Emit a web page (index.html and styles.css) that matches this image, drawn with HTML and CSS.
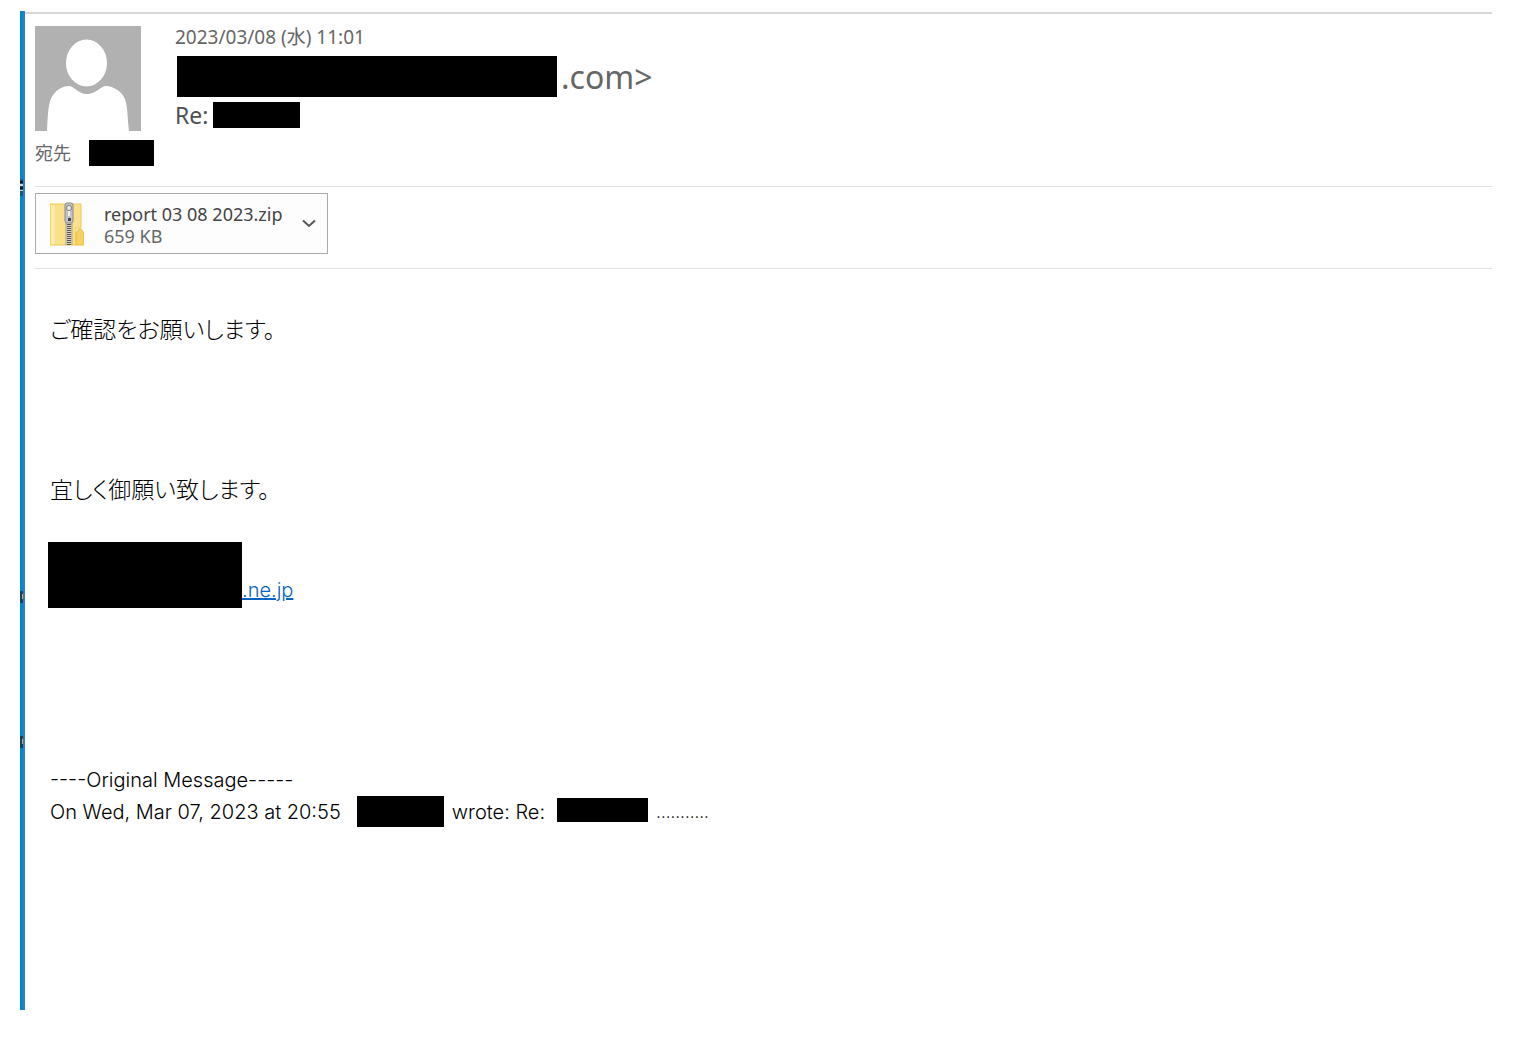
FILE: index.html
```html
<!DOCTYPE html>
<html lang="ja">
<head>
<meta charset="utf-8">
<title>Re: report 03 08 2023.zip</title>
<meta name="viewport" content="width=device-width, initial-scale=1">
<link rel="stylesheet" href="styles.css">
</head>
<body>
<div class="window">
  <svg class="edge" viewBox="0 0 5 999" preserveAspectRatio="none" aria-hidden="true">
    <rect width="5" height="999" fill="#0088cc"/>
    <rect x="3" width="2" height="999" fill="#2a7fc6"/>
    <path d="M0 168h3v17H0z" fill="#12577c"/>
    <path d="M0 170h3v2H0zM0 176h3v2H0z" fill="#111"/>
    <path d="M0 173h3v2H0zM0 179h3v1H0z" fill="#c9d6d8"/>
    <path d="M0 580h3v12H0zM0 725h3v12H0z" fill="#17415f"/>
    <path d="M2 583h1v5H2zM2 728h1v5H2z" fill="#d9a955"/>
  </svg>
  <main class="message">
    <header class="header">
      <svg class="avatar" viewBox="0 0 106 105" role="img" aria-label="Sender">
        <rect width="106" height="105" fill="#b1b1b1"/>
        <ellipse cx="51.500" cy="37" rx="20.500" ry="23.500" fill="#fff"/>
        <path d="M12 105 C13 87 13 76 18 69 C22 63 29 60 34 60 C39 60 43 68 52 68 C61 68 66 60 71 60 C77 60 85 64 89 71 C93 78 92 90 94 105Z" fill="#fff"/>
      </svg>
      <div class="details">
        <time class="date" datetime="2023-03-08T11:01">2023/03/08 (水) 11:01</time>
        <div class="sender"><span class="redacted redacted-sender"></span>.com&gt;</div>
        <h1 class="subject">Re:<span class="redacted redacted-subject"></span></h1>
      </div>
    </header>
    <div class="recipients">宛先<span class="redacted redacted-recipient"></span></div>
    <section class="attachments">
      <div class="attachment">
        <button class="file" type="button">
          <svg class="zip" viewBox="0 0 34 44" aria-hidden="true">
            <path d="M0 2h31v24h-5v17H0z" fill="#fae08a" stroke="#efc94f"/>
            <path d="M1 3h4v39H1z" fill="#fdebae"/>
            <path d="M26 43V31l3-4h2l3 4v12z" fill="#f8d25f" stroke="#eabf45"/>
            <path d="M16 17h6v26h-6z" fill="#d6d3c4"/>
            <path d="M19 20v23" stroke="#555" stroke-width="4" stroke-dasharray="1 1"/>
            <path d="M16 20v23M22 20v23" stroke="#aaa58e"/>
            <rect x="15" y="1" width="8" height="20" rx="2" fill="#bfc2c6" stroke="#888b90"/>
            <circle cx="19" cy="6" r="2.500" fill="#eee" stroke="#777"/>
            <path d="M19 9v5" stroke="#eceef0" stroke-width="2"/>
            <path d="M18 16h3v3h-3z" fill="#444"/>
          </svg>
          <span class="file-text"><span class="file-name">report 03 08 2023.zip</span><span class="file-size">659 KB</span></span>
        </button>
        <button class="more" type="button" aria-label="Attachment options">
          <svg class="chevron" viewBox="0 0 14 9" aria-hidden="true"><path d="M1 1.500l6 5.500 6-5.500" fill="none" stroke="#555" stroke-width="2"/></svg>
        </button>
      </div>
    </section>
    <article class="body">
      <p class="japanese">ご確認をお願いします。</p>
      <p class="japanese closing">宜しく御願い致します。</p>
      <div class="signature"><span class="redacted redacted-signature"></span><a class="mail" href="#mail">.ne.jp</a></div>
      <div class="quote">
        <p>----Original Message-----</p>
        <p class="quote-line"><span>On Wed, Mar 07, 2023 at 20:55</span><span class="redacted redacted-name"></span><span>wrote: Re:</span><span class="redacted redacted-topic"></span><span class="dots">...........</span></p>
      </div>
    </article>
  </main>
</div>
</body>
</html>
```
FILE: styles.css
```css
* { box-sizing: border-box; }
body { margin: 0; background: #fff; color: #000; font-family: "Noto Sans", "Noto Sans CJK JP", sans-serif; }
p, h1 { margin: 0; font-weight: inherit; }
button { margin: 0; padding: 0; border: 0; background: none; font: inherit; color: inherit; }
.window { display: flex; min-height: calc(100vh - 40px); margin: 11px 28px 29px 20px; }
.edge { flex: none; align-self: stretch; width: 5px; height: auto; }
.message { flex: 1; min-width: 0; padding-top: 12px; border-top: 2px solid #d8d8d8; margin-top: 1px; }
.redacted { display: inline-block; flex: none; background: #000; }

.header { display: flex; gap: 34px; padding-left: 10px; color: #666; }
.avatar { flex: none; width: 106px; height: 105px; }
.date { display: block; font-size: 19px; line-height: 22px; }
.sender { display: flex; align-items: center; gap: 4px; height: 41px; margin: 8px 0 5px 2px; font-size: 32px; line-height: 38px; }
.redacted-sender { width: 380px; height: 41px; }
.subject { display: flex; align-items: center; gap: 5px; height: 26px; font-size: 23px; line-height: 26px; color: #505050; }
.redacted-subject { width: 87px; height: 26px; }

.recipients { display: flex; align-items: center; gap: 18px; margin-top: 9px; padding-left: 10px; font-size: 18px; line-height: 26px; color: #666; }
.redacted-recipient { width: 65px; height: 26px; }

.attachments { margin: 20px 0 0 10px; padding: 6px 0 14px; border: solid #e1e1e1; border-width: 1px 0; }
.attachment { display: flex; width: 293px; height: 61px; border: 1px solid #aaa; background: #fdfdfd; }
.file { display: flex; flex: 1; align-items: center; gap: 20px; padding-left: 14px; text-align: left; }
.zip { width: 34px; height: 44px; }
.file-text { display: grid; padding-top: 2px; font-size: 18px; line-height: 22px; white-space: nowrap; }
.file-name { color: #444; }
.file-size { color: #666; }
.more { display: flex; align-items: center; justify-content: center; width: 36px; }
.chevron { width: 14px; height: 9px; }

.body { padding: 43px 0 0 25px; font-family: "Inter", sans-serif; font-size: 20px; font-weight: 300; line-height: 32px; }
.japanese { font-family: "Noto Sans CJK JP", sans-serif; font-size: 23px; font-feature-settings: "palt"; }
.closing { margin-top: 128px; }
.signature { display: flex; align-items: flex-end; margin: 38px 0 156px -2px; }
.redacted-signature { width: 194px; height: 66px; }
.mail { margin-bottom: 2px; color: #0563c1; }
.quote-line { display: flex; align-items: flex-start; }
.redacted-name { width: 87px; height: 31px; margin: 0 8px 0 16px; }
.redacted-topic { width: 91px; height: 24px; margin: 2px 8px 0 12px; }
.dots { font-size: 17px; }
```
